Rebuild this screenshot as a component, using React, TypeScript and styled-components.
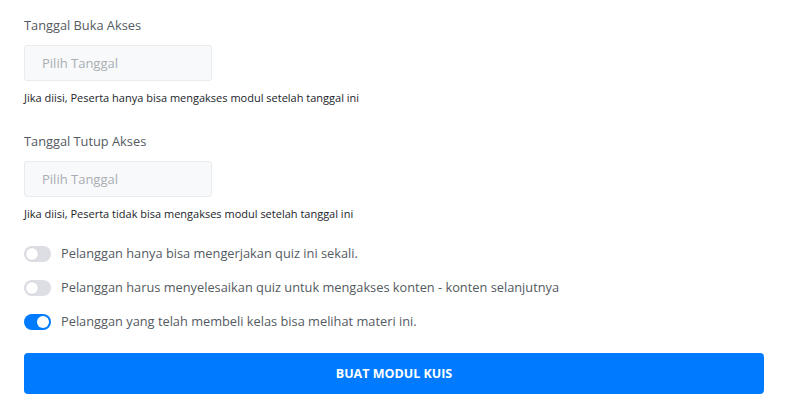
import styled, { createGlobalStyle } from 'styled-components';

const GlobalStyle = createGlobalStyle`
  body {
    margin: 0;
    background: #ffffff;
    font-family: "Open Sans", "Liberation Sans", sans-serif;
  }
`;

const Page = styled.div`
  padding: 15px 24px 0 24px;
  display: flex;
  flex-direction: column;
`;

const Field = styled.div<{ $space: number }>`
  display: flex;
  flex-direction: column;
  margin-bottom: ${(p) => p.$space}px;
`;

const Label = styled.label`
  font-size: 12.8px;
  color: #545b62;
  line-height: 20px;
  margin-bottom: 10px;
`;

const DateInput = styled.input`
  box-sizing: border-box;
  width: 188px;
  height: 36px;
  padding: 0 17px;
  border: 1px solid #e9ecef;
  border-radius: 3px;
  background: #f8f9fa;
  font-family: inherit;
  font-size: 13px;
  color: #495057;
  outline: none;

  &::placeholder {
    color: #a9aeb3;
  }
`;

const Help = styled.small`
  font-size: 11px;
  color: #212529;
  margin-top: 10px;
  line-height: 14px;
`;

const SwitchList = styled.div`
  display: flex;
  flex-direction: column;
  gap: 17px;
`;

const SwitchRow = styled.label`
  display: flex;
  align-items: center;
  gap: 10px;
  font-size: 12.8px;
  color: #545b62;
  line-height: 17px;
`;

const Track = styled.span<{ $on: boolean }>`
  position: relative;
  width: 27px;
  height: 16px;
  border-radius: 8px;
  background: ${(p) => (p.$on ? '#007bff' : '#dcdee3')};
  flex-shrink: 0;

  &::after {
    content: '';
    position: absolute;
    top: 2px;
    left: ${(p) => (p.$on ? '13px' : '2px')};
    width: 12px;
    height: 12px;
    border-radius: 50%;
    background: #ffffff;
    box-shadow: ${(p) => (p.$on ? 'none' : '0 0 0 0.5px #c8cbd0')};
  }
`;

const SubmitButton = styled.button`
  margin-top: 23px;
  height: 41px;
  border: none;
  border-radius: 4px;
  background: #007bff;
  color: #ffffff;
  font-family: inherit;
  font-size: 12.5px;
  font-weight: 700;
  cursor: pointer;
`;

const switches = [
  { text: 'Pelanggan hanya bisa mengerjakan quiz ini sekali.', on: false },
  { text: 'Pelanggan harus menyelesaikan quiz untuk mengakses konten - konten selanjutnya', on: false },
  { text: 'Pelanggan yang telah membeli kelas bisa melihat materi ini.', on: true },
];

export default function App() {
  return (
    <>
      <GlobalStyle />
      <Page>
        <Field $space={26}>
          <Label>Tanggal Buka Akses</Label>
          <DateInput placeholder="Pilih Tanggal" />
          <Help>Jika diisi, Peserta hanya bisa mengakses modul setelah tanggal ini</Help>
        </Field>
        <Field $space={24}>
          <Label>Tanggal Tutup Akses</Label>
          <DateInput placeholder="Pilih Tanggal" />
          <Help>Jika diisi, Peserta tidak bisa mengakses modul setelah tanggal ini</Help>
        </Field>
        <SwitchList>
          {switches.map((s) => (
            <SwitchRow key={s.text}>
              <Track $on={s.on} />
              {s.text}
            </SwitchRow>
          ))}
        </SwitchList>
        <SubmitButton>BUAT MODUL KUIS</SubmitButton>
      </Page>
    </>
  );
}
